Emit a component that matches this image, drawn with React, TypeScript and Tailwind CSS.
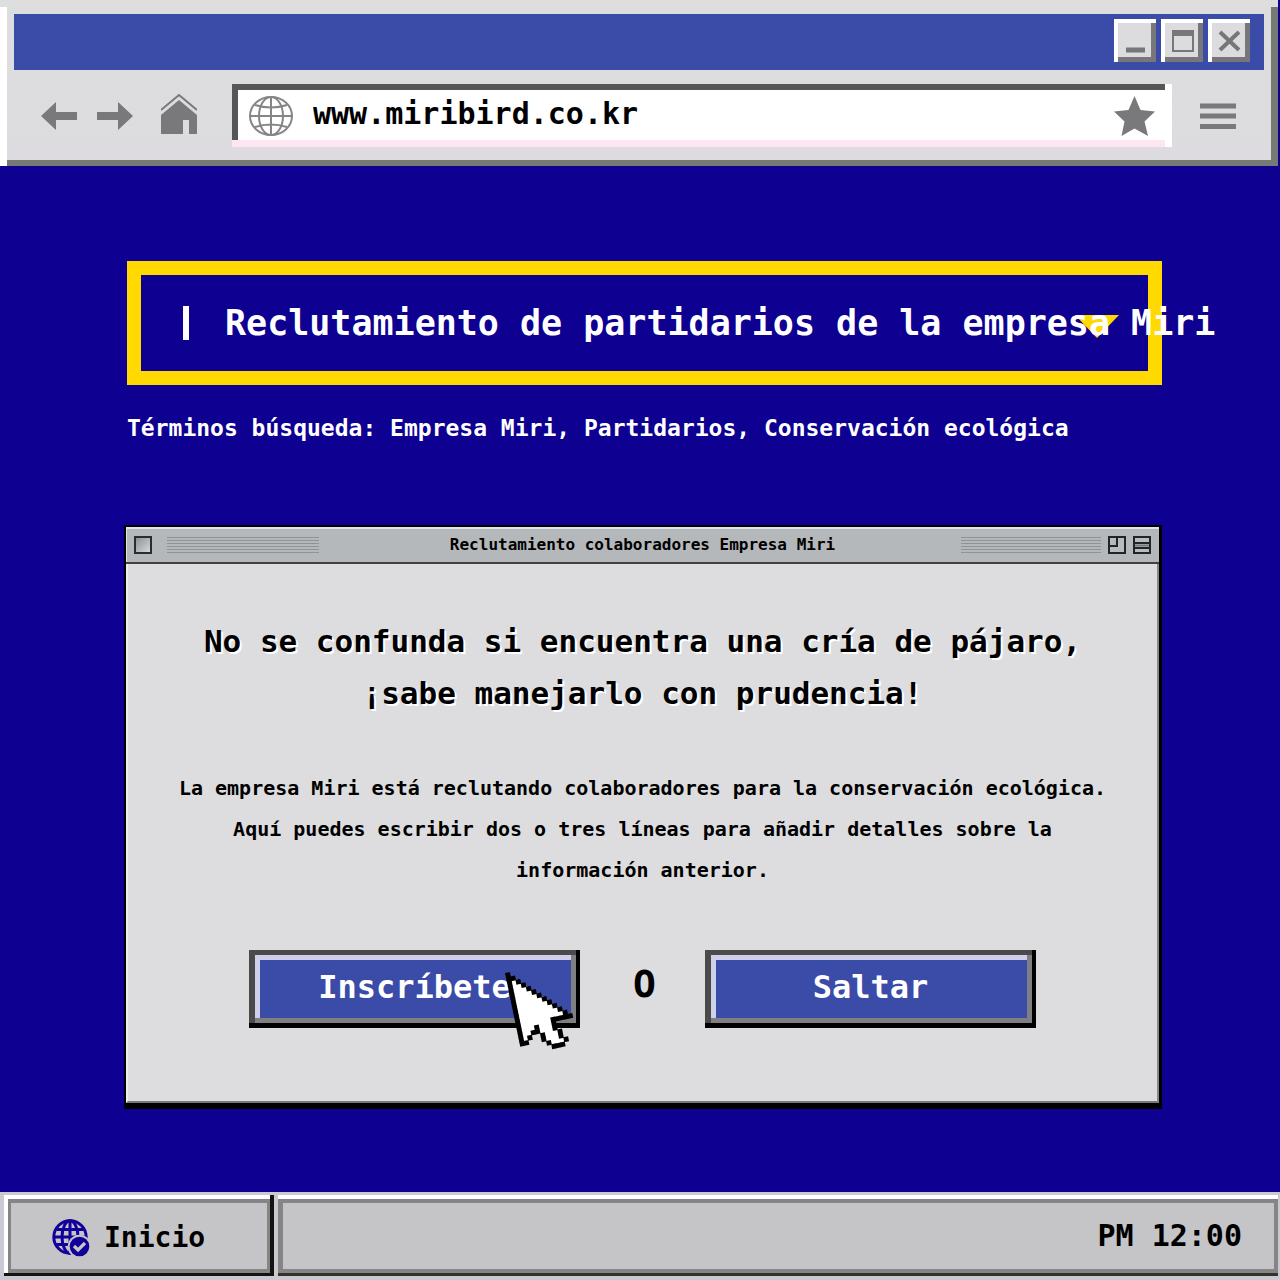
import type { ReactNode } from 'react';

const CURSOR_ROWS = [
  'X',
  'XX',
  'XoX',
  'XooX',
  'XoooX',
  'XooooX',
  'XoooooX',
  'XooooooX',
  'XoooooooX',
  'XooooooooX',
  'XoooooooooX',
  'XooooooooooX',
  'XoooooooXXXXX',
  'XoooXoooX',
  'XooXXoooX',
  'XoX  XoooX',
  'XX   XoooX',
  '      XoooX',
  '       XXX',
];

const CURSOR_CELLS = CURSOR_ROWS.flatMap((row, y) => row.split('').map((cell, x) => ({ cell, x, y })));

/** Pixel arrow pointer, tilted a little to the left. */
function PixelCursor() {
  return (
    <svg
      aria-hidden="true"
      className="pointer-events-none absolute top-3 left-[250px] h-[96px] w-[80px]"
      viewBox="0 0 80 96"
    >
      <g transform="translate(6 11) rotate(-11.7) scale(4.4)">
        {/* cells overlap slightly so the tilt leaves no seams; outline goes on top */}
        {CURSOR_CELLS.filter((c) => c.cell === 'o').map(({ x, y }) => (
          <rect key={`${x}:${y}`} x={x} y={y} width={1.4} height={1.4} fill="#fff" />
        ))}
        {CURSOR_CELLS.filter((c) => c.cell === 'X').map(({ x, y }) => (
          <rect key={`${x}:${y}`} x={x} y={y} width={1.12} height={1.12} fill="#000" />
        ))}
      </g>
    </svg>
  );
}

function GlobeIcon() {
  return (
    <svg aria-hidden="true" className="h-10 w-11 shrink-0" viewBox="0 0 44 40" fill="none" stroke="#858587" strokeWidth="2">
      <ellipse cx="22" cy="20" rx="21" ry="19" />
      <ellipse cx="22" cy="20" rx="12" ry="19" />
      <path d="M22 1v38M1 20h42M6 9q16 5 32 0M6 31q16-5 32 0" />
    </svg>
  );
}

function GlobeCheckIcon() {
  return (
    <svg aria-hidden="true" className="h-[38px] w-[38px]" viewBox="0 0 38 38" fill="none">
      <g stroke="#12009a" strokeWidth="3">
        <circle cx="18" cy="18" r="16.2" />
        <ellipse cx="18" cy="18" rx="8" ry="16.2" />
        <path d="M18 2v32M2 18h32M4.5 10.5h27M4.5 25.5h27" />
      </g>
      <circle cx="27.5" cy="27.5" r="11.8" fill="#c5c5c8" />
      <circle cx="27.5" cy="27.5" r="9.8" fill="#12009a" />
      <path d="m22 27 4 4 7-7" stroke="#c5c5c8" strokeWidth="3.2" />
    </svg>
  );
}

function CaptionButton({ label, children }: { label: string; children: ReactNode }) {
  return (
    <button
      type="button"
      aria-label={label}
      className="h-[43px] w-[42px] bg-[#dcdcde] shadow-[inset_4px_4px_0_#ffffff,inset_-5px_-5px_0_#77777a]"
    >
      <svg aria-hidden="true" className="h-[43px] w-[42px]" viewBox="0 0 42 43" fill="none" stroke="#77777a">
        {children}
      </svg>
    </button>
  );
}

function BrowserHeader() {
  return (
    <header className="mr-0.5 bg-[#dedede] pt-[7px]">
      <div className="bg-linear-to-b from-[#dcdede] to-[#dddbdf] px-[7px] pb-1.5 shadow-[inset_7px_0_0_#ffffff,inset_-7px_-6px_0_#767974]">
        <div className="px-[7px] pt-[7px]">
          <div className="flex h-14 items-center justify-end gap-[5px] bg-[#3b4ba8] pr-3.5 pb-1">
            <CaptionButton label="Minimizar">
              <path d="M12 31h19" strokeWidth="5" />
            </CaptionButton>
            <CaptionButton label="Maximizar">
              <path d="M11 14h22" strokeWidth="6" />
              <path d="M12 14v18h20V14" strokeWidth="2" />
            </CaptionButton>
            <CaptionButton label="Cerrar">
              <path d="m12 13 19 18M31 13 12 31" strokeWidth="4" />
            </CaptionButton>
          </div>
        </div>

        <nav aria-label="Navegador" className="flex items-center pt-3.5 pr-[35px] pb-[13px] pl-[34px]">
          <button type="button" aria-label="Atrás">
            <svg className="h-7 w-9" viewBox="0 0 36 28" fill="#79797b">
              <path d="M0 14 15 0v10h21v8H15v10z" />
            </svg>
          </button>
          <button type="button" aria-label="Adelante" className="ml-5">
            <svg className="h-7 w-9" viewBox="0 0 36 28" fill="#79797b">
              <path d="M36 14 21 0v10H0v8h21v10z" />
            </svg>
          </button>
          <button type="button" aria-label="Inicio" className="ml-7 pb-1">
            <svg className="h-10 w-9" viewBox="0 0 36 40" fill="#79797b">
              <path d="M0 21 18 6l18 15v19h-8V26h-6v14H0z" />
              <path d="M0 16 18 1l18 15" fill="none" stroke="#79797b" strokeWidth="2" />
            </svg>
          </button>

          <div className="ml-[35px] flex h-[63px] min-w-0 flex-1 items-center bg-white px-[17px] shadow-[inset_-7px_0_0_#ffffff,inset_0_-7px_0_#fde6f1,inset_6px_6px_0_#555656]">
            <GlobeIcon />
            <input
              type="text"
              aria-label="Dirección"
              defaultValue="www.miribird.co.kr"
              className="ml-5 h-9 min-w-0 flex-1 bg-transparent pb-1 text-[30px] text-black outline-none"
            />
            <button type="button" aria-label="Favoritos">
              <svg className="h-10 w-[41px]" viewBox="0 0 41 40" fill="#79797b">
                <path d="m20.5 0 6 14L41 15.500 30.500 25.500 34 40 20.500 32.500 7.500 40 10.500 25.500 0 15.500l14.500-1.500z" />
              </svg>
            </button>
          </div>

          <button type="button" aria-label="Menú" className="ml-7">
            <svg className="h-7 w-9" viewBox="0 0 36 28" stroke="#79797b" strokeWidth="5">
              <path d="M0 4h36M0 14h36M0 24.500h36" />
            </svg>
          </button>
        </nav>
      </div>
    </header>
  );
}

function SearchBox() {
  return (
    <div className="relative flex h-[124px] items-center border-[14px] border-[#ffd900] pl-[42px] text-[35px] text-white">
      <button type="button" aria-label="Ver opciones" className="absolute top-10 right-[29px]">
        <svg className="h-[23px] w-11" viewBox="0 0 44 23" fill="#ffd900">
          <path d="M0 0h44L22 23z" />
        </svg>
      </button>
      <span aria-hidden="true" className="h-[34px] w-1.5 bg-white" />
      {/* the query is longer than the box and runs out over its right edge */}
      <input
        type="text"
        aria-label="Búsqueda"
        defaultValue="Reclutamiento de partidarios de la empresa Miri"
        className="relative -mr-[90px] ml-9 h-12 min-w-0 flex-1 bg-transparent outline-none"
      />
    </div>
  );
}

function Stripes({ className }: { className: string }) {
  return (
    <div
      aria-hidden="true"
      className={`h-4 bg-[repeating-linear-gradient(to_bottom,#8e9395_0px,#8e9395_1px,transparent_1px,transparent_3px)] ${className}`}
    />
  );
}

function DialogTitleBar() {
  return (
    <div className="grid h-[37px] grid-cols-[1fr_auto_1fr] items-center border-b-2 border-[#3f4042] bg-[#b5b8ba] px-2 shadow-[inset_1px_2px_0_#dfe6e8]">
      <div className="flex items-center gap-[15px]">
        <button type="button" aria-label="Cerrar ventana" className="h-[18px] w-[18px] border-2 border-[#2b2c2e] bg-linear-to-br from-[#8f9193] to-[#d5d7d9]" />
        <Stripes className="w-[152px]" />
      </div>
      <h2 className="text-base">Reclutamiento colaboradores Empresa Miri</h2>
      <div className="flex items-center justify-end gap-[7px]">
        <Stripes className="w-[140px]" />
        <button type="button" aria-label="Ampliar ventana">
          <svg className="h-[18px] w-[18px]" viewBox="0 0 18 18" fill="#b9bcbe" stroke="#232426" strokeWidth="2">
            <path d="M1 1h16v16H1zM1 10h8V1" />
          </svg>
        </button>
        <button type="button" aria-label="Plegar ventana">
          <svg className="h-[18px] w-[18px]" viewBox="0 0 18 18" fill="#b9bcbe" stroke="#232426" strokeWidth="2">
            <path d="M1 1h16v16H1z" />
            <path d="M1 7h16M1 12h16" />
            <path d="M2 9.500h14" stroke="#77797b" />
          </svg>
        </button>
      </div>
    </div>
  );
}

function BevelButton({ children }: { children: ReactNode }) {
  return (
    <button
      type="button"
      className="h-[78px] w-[331px] bg-[#3b4ba8] pb-1 text-[32px] text-white shadow-[inset_-4px_-5px_0_#000000,inset_6px_5px_0_#4a4a4b,inset_-9px_-10px_0_#7f7f82,inset_11px_10px_0_#cfcfea]"
    >
      {children}
    </button>
  );
}

function RecruitDialog() {
  return (
    <section className="mt-[81px] -ml-[3px] border-t-2 border-r-[3px] border-b-[6px] border-l-2 border-black bg-[#dddddf] text-black">
      <DialogTitleBar />
      <div className="flex flex-col items-center border-r-2 border-b-2 border-l-2 border-r-[#85888a] border-b-[#77797b] border-l-[#e9eef0] pt-[51px] pb-[73px] text-center">
        <h1 className="text-[31px] leading-[52px] text-shadow-[2px_2px_0_#ffffff]">
          No se confunda si encuentra una cría de pájaro,
          <br />
          ¡sabe manejarlo con prudencia!
        </h1>
        <p className="mt-[49px] max-w-[940px] text-xl leading-[41px]">
          La empresa Miri está reclutando colaboradores para la conservación ecológica. Aquí puedes escribir dos o tres
          líneas para añadir detalles sobre la información anterior.
        </p>
        <div className="mt-[59px] flex items-center">
          <div className="relative">
            <BevelButton>Inscríbete</BevelButton>
            <PixelCursor />
          </div>
          <span className="w-[125px] pb-2.5 pl-1 text-[38px] leading-10">O</span>
          <BevelButton>Saltar</BevelButton>
        </div>
      </div>
    </section>
  );
}

function Taskbar() {
  return (
    <footer className="flex h-[88px] gap-1 bg-[#cbc8d2] pt-[3px] pr-0.5 pb-1 pl-1 text-black">
      <button
        type="button"
        className="flex w-[270px] items-center gap-3.5 bg-[#c5c5c8] pt-1 pl-12 text-[28px] shadow-[inset_-4px_-3px_0_#14140f,inset_4px_4px_0_#ffffff,inset_-7px_-7px_0_#858587,inset_7px_8px_0_#858587]"
      >
        <GlobeCheckIcon />
        Inicio
      </button>
      <div className="flex flex-1 items-center justify-end bg-[#c5c5c8] pr-9 shadow-[inset_0_-3px_0_#33332b,inset_0_4px_0_#ffffff,inset_-4px_-7px_0_#858587,inset_5px_8px_0_#858587]">
        <time className="text-[30px]">PM 12:00</time>
      </div>
    </footer>
  );
}

export default function App() {
  return (
    <div className="flex min-h-screen flex-col overflow-x-hidden bg-[#0e0090] font-['DejaVu_Sans_Mono','Liberation_Mono',monospace] font-bold">
      <BrowserHeader />
      <main className="flex-1 pt-[95px] pr-[118px] pb-[82px] pl-[127px]">
        <SearchBox />
        <p className="mt-[27px] text-[23px] leading-8 text-white">
          Términos búsqueda: Empresa Miri, Partidarios, Conservación ecológica
        </p>
        <RecruitDialog />
      </main>
      <Taskbar />
    </div>
  );
}
